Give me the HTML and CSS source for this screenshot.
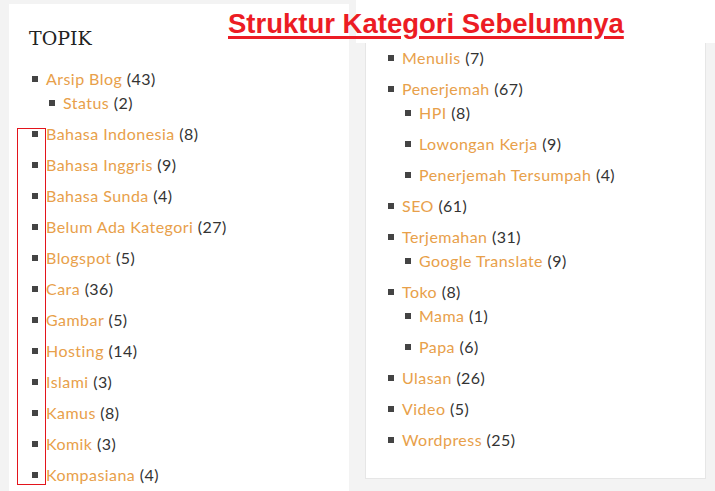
FILE: index.html
```html
<!DOCTYPE html>
<html>
<head>
<meta charset="utf-8">
<link rel="stylesheet" href="styles.css">
</head>
<body>
<div class="page">
  <section class="panel panel-left">
    <h2 class="widget-title">TOPIK</h2>
    <ul class="cats cats-left">
      <li><a>Arsip Blog</a> (43)
        <ul class="sub">
          <li><a>Status</a> (2)</li>
        </ul>
      </li>
      <li><a>Bahasa Indonesia</a> (8)</li>
      <li><a>Bahasa Inggris</a> (9)</li>
      <li><a>Bahasa Sunda</a> (4)</li>
      <li><a>Belum Ada Kategori</a> (27)</li>
      <li><a>Blogspot</a> (5)</li>
      <li><a>Cara</a> (36)</li>
      <li><a>Gambar</a> (5)</li>
      <li><a>Hosting</a> (14)</li>
      <li><a>Islami</a> (3)</li>
      <li><a>Kamus</a> (8)</li>
      <li><a>Komik</a> (3)</li>
      <li><a>Kompasiana</a> (4)</li>
    </ul>
    <div class="mark-box"></div>
  </section>
  <div class="right-col">
    <div class="top-strip"></div>
    <section class="panel panel-right">
      <ul class="cats">
        <li><a>Menulis</a> (7)</li>
        <li><a>Penerjemah</a> (67)
          <ul class="sub">
            <li><a>HPI</a> (8)</li>
            <li><a>Lowongan Kerja</a> (9)</li>
            <li><a>Penerjemah Tersumpah</a> (4)</li>
          </ul>
        </li>
        <li><a>SEO</a> (61)</li>
        <li><a>Terjemahan</a> (31)
          <ul class="sub">
            <li><a>Google Translate</a> (9)</li>
          </ul>
        </li>
        <li><a>Toko</a> (8)
          <ul class="sub">
            <li><a>Mama</a> (1)</li>
            <li><a>Papa</a> (6)</li>
          </ul>
        </li>
        <li><a>Ulasan</a> (26)</li>
        <li><a>Video</a> (5)</li>
        <li><a>Wordpress</a> (25)</li>
      </ul>
    </section>
  </div>
  <div class="caption">Struktur Kategori Sebelumnya</div>
</div>
</body>
</html>
```
FILE: styles.css
```css
html, body {
  margin: 0;
  padding: 0;
  background: #f3f3f3;
  overflow: hidden;
}
.page {
  position: relative;
  display: flex;
  width: 715px;
  height: 491px;
  overflow: hidden;
  font-family: Lato, "Open Sans", sans-serif;
  font-size: 16px;
  color: #333;
}
.panel {
  background: #fff;
  box-sizing: border-box;
}
.panel-left {
  position: relative;
  margin: 4px 0 0 9px;
  width: 340px;
  height: 520px;
  padding: 22px 0 0 0;
  flex: none;
}
.widget-title {
  margin: 0 0 17px 20px;
  font-family: "DejaVu Serif", serif;
  font-weight: normal;
  font-size: 19px;
  line-height: 24px;
  color: #222;
}
.right-col {
  margin-left: 7px;
  width: 359px;
  flex: none;
  display: flex;
  flex-direction: column;
}
.top-strip {
  height: 43px;
  background: #fff;
}
.panel-right {
  margin-left: 9px;
  width: 341px;
  height: 436px;
  padding-top: 3px;
  border: 1px solid #e6e6e6;
  border-top: none;
}
.cats {
  list-style: none;
  margin: 0;
  padding: 0 0 0 22px;
}
.cats-left {
  padding-left: 23px;
}
.cats li {
  line-height: 24px;
  white-space: nowrap;
  letter-spacing: 0.45px;
}
.cats li + li {
  margin-top: 7px;
}
.cats li::before {
  content: "";
  display: inline-block;
  width: 6px;
  height: 6px;
  background: #444;
  margin-right: 8px;
  vertical-align: 3px;
}
.cats a {
  color: #e8a04a;
  text-decoration: none;
}
.sub {
  list-style: none;
  margin: 0;
  padding: 0 0 0 17px;
}
.mark-box {
  position: absolute;
  left: 8px;
  top: 124px;
  width: 27px;
  height: 355px;
  border: 1px solid #e3141c;
}
.caption {
  position: absolute;
  left: 228px;
  top: 8px;
  font-family: "Liberation Sans", Arial, sans-serif;
  font-weight: bold;
  font-size: 27.5px;
  line-height: 32px;
  color: #ec1c24;
  text-decoration: underline;
  text-decoration-thickness: 3px;
  text-underline-offset: 3px;
}
```
